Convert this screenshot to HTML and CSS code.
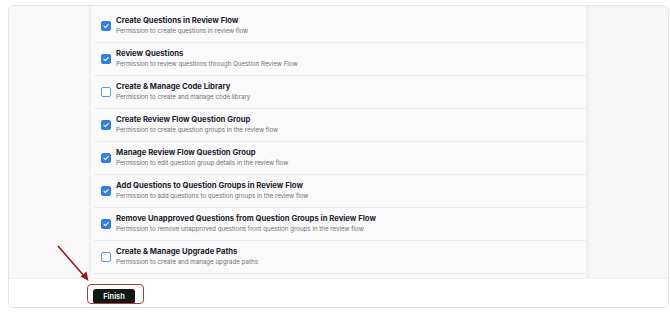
FILE: index.html
```html
<!DOCTYPE html>
<html>
<head>
<meta charset="utf-8">
<link rel="stylesheet" href="styles.css">
</head>
<body>
<div class="card">
  <div class="main">
    <div class="side-left"></div>
    <div class="list">
      <div class="row">
        <span class="cb on"><svg viewBox="0 0 10 10"><path d="M2.4 5.2 L4.2 7 L7.7 3.2" /></svg></span>
        <div class="txt"><div class="t">Create Questions in Review Flow</div><div class="d">Permission to create questions in review flow</div></div>
      </div>
      <div class="row">
        <span class="cb on"><svg viewBox="0 0 10 10"><path d="M2.4 5.2 L4.2 7 L7.7 3.2" /></svg></span>
        <div class="txt"><div class="t">Review Questions</div><div class="d">Permission to review questions through Question Review Flow</div></div>
      </div>
      <div class="row">
        <span class="cb"></span>
        <div class="txt"><div class="t">Create &amp; Manage Code Library</div><div class="d">Permission to create and manage code library</div></div>
      </div>
      <div class="row">
        <span class="cb on"><svg viewBox="0 0 10 10"><path d="M2.4 5.2 L4.2 7 L7.7 3.2" /></svg></span>
        <div class="txt"><div class="t">Create Review Flow Question Group</div><div class="d">Permission to create question groups in the review flow</div></div>
      </div>
      <div class="row">
        <span class="cb on"><svg viewBox="0 0 10 10"><path d="M2.4 5.2 L4.2 7 L7.7 3.2" /></svg></span>
        <div class="txt"><div class="t">Manage Review Flow Question Group</div><div class="d">Permission to edit question group details in the review flow</div></div>
      </div>
      <div class="row">
        <span class="cb on"><svg viewBox="0 0 10 10"><path d="M2.4 5.2 L4.2 7 L7.7 3.2" /></svg></span>
        <div class="txt"><div class="t">Add Questions to Question Groups in Review Flow</div><div class="d">Permission to add questions to question groups in the review flow</div></div>
      </div>
      <div class="row">
        <span class="cb on"><svg viewBox="0 0 10 10"><path d="M2.4 5.2 L4.2 7 L7.7 3.2" /></svg></span>
        <div class="txt"><div class="t">Remove Unapproved Questions from Question Groups in Review Flow</div><div class="d">Permission to remove unapproved questions from question groups in the review flow</div></div>
      </div>
      <div class="row">
        <span class="cb"></span>
        <div class="txt"><div class="t">Create &amp; Manage Upgrade Paths</div><div class="d">Permission to create and manage upgrade paths</div></div>
      </div>
    </div>
    <div class="side-right"></div>
  </div>
  <div class="footer">
    <button class="finish">Finish</button>
  </div>
</div>
<div class="highlight"></div>
<svg class="arrow" width="670" height="319" viewBox="0 0 670 319">
  <line x1="58" y1="246" x2="85" y2="277" stroke="#9e1b1b" stroke-width="1.6" />
  <path d="M88.5 281 L80.5 276.5 L86.5 271.5 Z" fill="#9e1b1b" />
</svg>
</body>
</html>
```
FILE: styles.css
```css
html, body {
  margin: 0;
  padding: 0;
  background: #ffffff;
  font-family: Inter, "Noto Sans", sans-serif;
}
body {
  width: 670px;
  height: 319px;
  overflow: hidden;
  position: relative;
}
.card {
  margin: 5px 0 0 8px;
  width: 659px;
  height: 301px;
  border: 1px solid #e3e4ea;
  border-radius: 6px;
  overflow: hidden;
  display: flex;
  flex-direction: column;
  background: #fff;
}
.main {
  display: flex;
  height: 272px;
  flex: none;
  overflow: hidden;
}
.side-left {
  width: 81px;
  background: #f8f8f9;
}
.list {
  width: 495px;
  background: #fafafa;
  border-left: 1px solid #efeff1;
  border-right: 1px solid #efeff1;
  box-shadow: -1px 0 2px rgba(0,0,0,0.03);
  padding-top: 4px;
}
.side-right {
  flex: 1;
  background: #f6f6f7;
  box-shadow: inset 2px 0 3px rgba(0,0,0,0.03);
}
.row {
  display: flex;
  align-items: center;
  height: 32px;
  border-bottom: 1px solid #ececee;
  padding-left: 10px;
  margin-left: 3px;
}
.cb {
  width: 10px;
  height: 10px;
  border: 1.3px solid #5b9af0;
  border-radius: 2px;
  background: #fff;
  box-sizing: border-box;
  margin-right: 5px;
  margin-left: -3px;
  flex: none;
  display: flex;
}
.cb.on {
  background: #2f7fe8;
  border-color: #2f7fe8;
}
.cb svg {
  width: 100%;
  height: 100%;
}
.cb svg path {
  fill: none;
  stroke: #fff;
  stroke-width: 1.4;
  stroke-linecap: round;
  stroke-linejoin: round;
}
.txt {
  display: flex;
  flex-direction: column;
  margin-top: -2px;
}
.t {
  font-size: 7.7px;
  font-weight: 700;
  color: #1e2230;
  line-height: 10px;
}
.d {
  font-size: 6.2px;
  color: #6b7079;
  line-height: 9px;
}
.footer {
  flex: 1;
  display: flex;
  align-items: flex-start;
  background: #fff;
  border-top: 1px solid #f0f0f2;
  padding-left: 84px;
  padding-top: 10px;
}
.finish {
  width: 42px;
  height: 15px;
  background: #0e1a13;
  color: #fff;
  border: none;
  border-radius: 3px;
  font-family: Inter, "Noto Sans", sans-serif;
  font-size: 7.5px;
  font-weight: 600;
  padding: 0;
}
.highlight {
  position: absolute;
  left: 87px;
  top: 284px;
  width: 57px;
  height: 20px;
  border: 1px solid #b23a3a;
  border-radius: 4px;
  box-sizing: border-box;
}
.arrow {
  position: absolute;
  left: 0;
  top: 0;
  pointer-events: none;
}
```
